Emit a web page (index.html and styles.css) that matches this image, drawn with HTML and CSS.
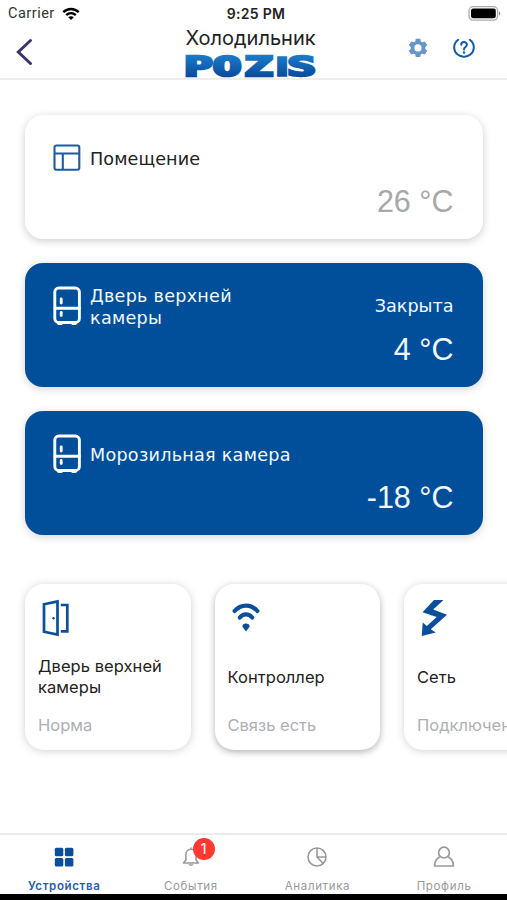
FILE: index.html
```html
<!DOCTYPE html>
<html lang="ru">
<head>
<meta charset="utf-8">
<meta name="viewport" content="width=device-width">
<title>Холодильник</title>
<link rel="stylesheet" href="styles.css">
</head>
<body>
<div class="app">
  <div class="status">
    <div class="carrier"><span class="carrier-name">Carrier</span>
      <svg width="18" height="14" viewBox="0 0 18 14"><g fill="none" stroke="#000" stroke-width="2.4"><path d="M1.3 5.2C5.6.9 12.4.9 16.7 5.2"/><path d="M4.2 8.2c2.8-2.6 6.8-2.6 9.6 0"/></g><path d="M9 13 6.2 10.2c1.6-1.4 4-1.4 5.6 0z"/></svg>
    </div>
    <div class="clock">9:25 PM</div>
    <svg class="battery" width="33" height="15" viewBox="0 0 33 15"><rect x="1" y=".7" width="28.6" height="13.4" rx="4" fill="#fff" stroke="#aaa" stroke-width="1.3"/><rect x="3" y="2.6" width="24.8" height="9.7" rx="2.2"/><path d="M31 5.2c1.7.8 1.7 3.600 0 4.400z" fill="#888"/></svg>
  </div>
  <header class="header">
    <svg class="back" width="18" height="28" viewBox="0 0 18 28"><path d="M14.500 2.500 2.300 14 14.500 25.500" fill="none" stroke="#38396a" stroke-width="3" stroke-linecap="round"/></svg>
    <div class="title">
      <span class="title-text">Холодильник</span>
      <svg class="logo" width="133" height="23" viewBox="0 0 133 23"><defs><linearGradient id="lg" x1="0" y1="0" x2="0" y2="23" gradientUnits="userSpaceOnUse"><stop offset="0" stop-color="#1b7cca"/><stop offset="1" stop-color="#08489b"/></linearGradient></defs><text class="logo-text" transform="scale(1.800 1)" y="20.600" fill="url(#lg)" stroke="url(#lg)"><tspan x="0">P</tspan><tspan x="16">O</tspan><tspan x="33.500">Z</tspan><tspan class="logo-i" x="50.500">I</tspan><tspan x="57.300">S</tspan></text></svg>
    </div>
    <div class="actions">
      <svg width="20" height="20" viewBox="0 0 20 20"><path fill="#6796c8" fill-rule="evenodd" d="M7.800.8h4.400l.6 2.600 1.400.8 2.500-.8 2.500 3.700-1.900 1.900v1.900l1.900 1.900-2.300 3.800-2.700-.8-1.400.8-.6 2.500H7.800l-.6-2.500-1.400-.8-2.700.8L.8 12.800l1.900-1.900V9L.8 7.100l2.500-3.700 2.500.8 1.400-.8zM10 6.300a3.600 3.600 0 1 0 0 7.200 3.600 3.600 0 0 0 0-7.200z"/></svg>
      <svg width="22" height="20" viewBox="0 0 22 20"><g fill="none" stroke="#145aa5" stroke-width="2" stroke-linecap="round"><path d="M5.200 1.800C-1 6.500.2 15.500 7.500 18c2.200.8 4.800.8 7 0C21.800 15.500 23 6.500 16.800 1.800"/><path d="M8.200 6.700c0-3.500 5.700-3.600 5.700 0 0 2.300-2.900 2.200-2.900 4.700"/></g><circle cx="11" cy="14.500" r="1.200" fill="#145aa5"/></svg>
    </div>
  </header>
  <main class="main">
    <section class="card">
      <div class="card-name"><svg width="28" height="28" viewBox="0 0 28 28"><g fill="none" stroke="#1b5da6" stroke-width="2.100"><rect x="1.500" y="1.500" width="24.800" height="24.300" rx="2"/><path d="M2 9.500h24.500M9.800 9.500v16.500"/></g></svg><span class="label dark">Помещение</span></div>
      <div class="temp muted">26 °C</div>
    </section>
    <section class="card blue">
      <div class="card-name"><svg width="28" height="40" viewBox="0 0 28 40"><g fill="none" stroke="#fff" stroke-width="2.900" stroke-linecap="round"><rect x="1.800" y="2" width="24.600" height="34.500" rx="4"/><path d="M2 22.200h24.500M8.200 13v4M8.200 26.500v3M5.500 37.600h3M19.500 37.600h3"/></g></svg><span class="label">Дверь верхней<br>камеры</span></div>
      <div class="state">Закрыта</div>
      <div class="temp">4 °C</div>
    </section>
    <section class="card blue">
      <div class="card-name"><svg width="28" height="40" viewBox="0 0 28 40"><g fill="none" stroke="#fff" stroke-width="2.900" stroke-linecap="round"><rect x="1.800" y="2" width="24.600" height="34.500" rx="4"/><path d="M2 22.200h24.500M8.200 13v4M8.200 26.500v3M5.500 37.600h3M19.500 37.600h3"/></g></svg><span class="label">Морозильная камера</span></div>
      <div class="temp">-18 °C</div>
    </section>
    <div class="tiles">
      <section class="tile">
        <svg width="28" height="38" viewBox="0 0 28 38"><g fill="none" stroke="#0b4f9c" stroke-width="2.700"><path d="M2 5.300 15.500 2.500v33L2 32.700zM18.800 6h6.500v26.300h-6.500"/></g><circle cx="11.500" cy="19.300" r="1.200" fill="#0b4f9c"/></svg>
        <div class="tile-name">Дверь верхней<br>камеры</div><div class="tile-state">Норма</div>
      </section>
      <section class="tile strong">
        <svg width="28" height="38" viewBox="0 0 28 38"><g fill="none" stroke="#0b4f9c" stroke-width="4.200" stroke-linecap="round"><path d="M2.600 12c6.200-7.300 16.600-7.300 22.800 0"/><path d="M7.800 18.500c3.500-4.300 8.900-4.300 12.400 0"/></g><path d="m14 32.500-3.600-4.800c-.6-4.300 7.800-4.300 7.200 0z" fill="#0b4f9c"/></svg>
        <div class="tile-name">Контроллер</div><div class="tile-state">Связь есть</div>
      </section>
      <section class="tile">
        <svg width="28" height="38" viewBox="0 0 28 38"><path d="M13 1h9.500L12.200 10.500l13.800 5.300L9.800 30.200l5 3.300L.8 37l.9-13.500 4.200 3.600 9.800-9.200-14.200-4.700z" fill="#0b4f9c"/></svg>
        <div class="tile-name">Сеть</div><div class="tile-state">Подключено</div>
      </section>
    </div>
  </main>
  <nav class="nav">
    <div class="tab active"><svg width="22" height="22" viewBox="0 0 22 22" fill="#0b4f9c"><rect x="1.800" y="1.800" width="8.500" height="8.500" rx="1.500"/><rect x="11.900" y="1.800" width="8.500" height="8.500" rx="1.500"/><rect x="1.800" y="11.900" width="8.500" height="8.500" rx="1.500"/><rect x="11.900" y="11.900" width="8.500" height="8.500" rx="1.500"/></svg><span>Устройства</span></div>
    <div class="tab"><svg width="22" height="22" viewBox="0 0 22 22"><g fill="none" stroke="#999" stroke-width="1.600" stroke-linejoin="round"><path d="M3.500 17h15l-2.400-3V8.500c0-3-2-5.300-5.100-5.300S5.900 5.500 5.900 8.500V14zM11 1.500v1.700"/></g><path d="M8.500 18.300h5c-.6 2.200-4.400 2.200-5 0z" fill="#999"/></svg><span>События</span><b class="badge">1</b></div>
    <div class="tab"><svg width="22" height="22" viewBox="0 0 22 22"><g fill="none" stroke="#999" stroke-width="1.600"><circle cx="11" cy="11" r="9"/><path d="M11 2v9h9M11 11l6.200 6.500"/></g></svg><span>Аналитика</span></div>
    <div class="tab"><svg width="22" height="22" viewBox="0 0 22 22"><g fill="none" stroke="#999" stroke-width="1.700"><circle cx="11" cy="6.600" r="5.400"/><path d="M6.800 10.800C3.600 12.500 1.700 15.300 1.600 20h18.800c-.1-4.700-2-7.500-5.200-9.200" stroke-linejoin="round"/></g></svg><span>Профиль</span></div>
  </nav>
</div>
</body>
</html>
```
FILE: styles.css
```css
* { box-sizing: border-box; }
body { margin: 0; background: #fff; font-family: Inter, "Liberation Sans", sans-serif; }
svg { display: block; flex: none; }
.app { width: 507px; height: 900px; overflow: hidden; display: flex; flex-direction: column; border-bottom: 6px solid #000; }
.status { height: 27px; display: grid; grid-template-columns: 1fr auto 1fr; align-items: center; padding: 0 6px 0 8px; flex: none; }
.carrier { display: flex; gap: 7px; align-items: center; font: 14.500px/20px Roboto, sans-serif; color: #333; letter-spacing: .5px; }
.clock { font-size: 14px; font-weight: 600; line-height: 20px; letter-spacing: .3px; color: #222; padding-left: 3px; }
.battery { justify-self: end; }
.header { height: 53px; flex: none; display: grid; grid-template-columns: 168px 133px 1fr; border-bottom: 2px solid #eee; padding: 0 32px 0 16px; }
.back { margin-top: 11px; }
.title { display: flex; flex-direction: column; align-items: center; }
.title-text { font-size: 20px; line-height: 22px; color: #222; white-space: nowrap; }
.logo { margin-top: 6px; overflow: visible; }
.logo-text { font-family: "DejaVu Sans Mono", monospace; font-size: 26.500px; font-weight: 700; stroke-width: 2.500px; }
.logo-i { font-family: "Liberation Sans", sans-serif; font-size: 28px; stroke-width: 1.500px; }
.actions { display: flex; justify-content: flex-end; gap: 25px; padding-top: 11px; }
.main { flex: 1; padding: 35px 0 0 25px; display: flex; flex-direction: column; gap: 24px; overflow: hidden; }
.card { width: 457.500px; height: 124px; flex: none; border-radius: 18px; padding: 22px 29px 0 28px; background: #fff; box-shadow: 0 2px 8px rgba(0,0,0,.2); display: flex; flex-direction: column; }
.blue { background: #014e9a; color: #f3f8ff; box-shadow: 0 2px 8px rgba(0,0,0,.17); }
.card-name { height: 41px; display: flex; align-items: center; gap: 9px; }
.label { font: 17.600px/22px "DejaVu Sans", sans-serif; letter-spacing: .25px; white-space: nowrap; padding-top: 2px; }
.dark { color: #222; letter-spacing: .1px; }
.state { font: 17.600px/22px "DejaVu Sans", sans-serif; text-align: right; margin-top: -31px; }
.temp { font: 30.500px/34px "Liberation Sans", sans-serif; text-align: right; margin-top: auto; margin-bottom: 21px; }
.muted { color: #a6a8a9; }
.tiles { display: flex; gap: 24px; margin-top: 25px; }
.tile { flex: none; width: 165.500px; height: 166px; border-radius: 19px; padding: 15px 13px 0; background: #fff; box-shadow: 0 1px 8px rgba(0,0,0,.18); }
.strong { box-shadow: 0 2px 7px rgba(0,0,0,.31); }
.tile svg { margin-left: 4px; }
.tile-name { height: 42px; margin-top: 19px; display: flex; align-items: center; font-size: 16.500px; line-height: 21px; letter-spacing: .05px; color: #222; white-space: nowrap; }
.tile-state { margin-top: 17px; font-size: 16.500px; line-height: 21px; color: #adb0b3; white-space: nowrap; }
.nav { height: 61px; flex: none; border-top: 2px solid #ebebeb; display: grid; grid-template-columns: repeat(4, 126.600px); padding-left: 1px; background: #fff; }
.tab { position: relative; display: flex; flex-direction: column; align-items: center; padding-top: 11px; font-size: 11.500px; line-height: 14px; color: #999; letter-spacing: .65px; }
.tab span { margin-top: 11px; }
.active { color: #2460aa; font-weight: 600; }
.badge { position: absolute; left: 65px; top: 3px; width: 22px; height: 22px; border-radius: 50%; background: #ff3830; color: #fff; font-size: 15px; font-weight: 400; line-height: 22px; letter-spacing: 0; text-align: center; }
```
